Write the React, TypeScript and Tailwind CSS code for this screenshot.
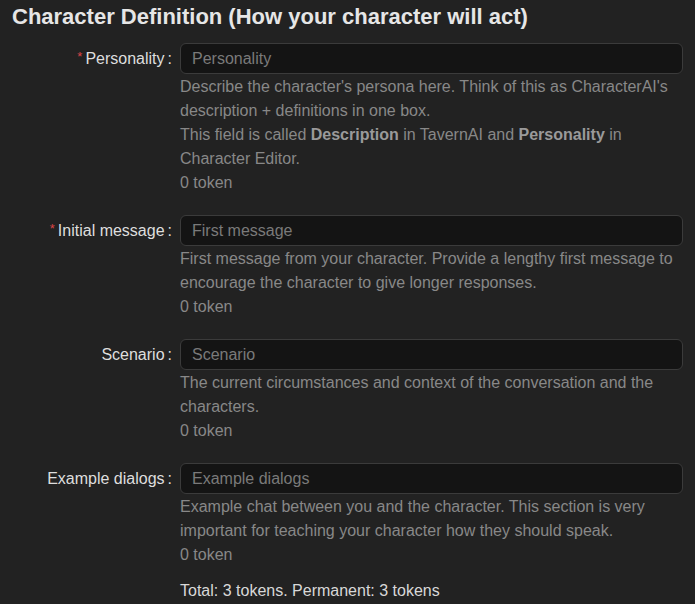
import React from "react";

type Row = {
  label: string;
  required?: boolean;
  placeholder: string;
  help: React.ReactNode;
};

const rows: Row[] = [
  {
    label: "Personality",
    required: true,
    placeholder: "Personality",
    help: (
      <>
        <div>
          Describe the character's persona here. Think of this as CharacterAI's description + definitions in one box.
        </div>
        <div>
          This field is called <b className="font-bold text-[#9a9a9a]">Description</b> in TavernAI and{" "}
          <b className="font-bold text-[#9a9a9a]">Personality</b> in Character Editor.
        </div>
      </>
    ),
  },
  {
    label: "Initial message",
    required: true,
    placeholder: "First message",
    help: (
      <div>
        First message from your character. Provide a lengthy first message to encourage the character to give longer responses.
      </div>
    ),
  },
  {
    label: "Scenario",
    placeholder: "Scenario",
    help: <div>The current circumstances and context of the conversation and the characters.</div>,
  },
  {
    label: "Example dialogs",
    placeholder: "Example dialogs",
    help: (
      <div>
        Example chat between you and the character. This section is very important for teaching your character how they should speak.
      </div>
    ),
  },
];

export default function App() {
  return (
    <div className="w-[695px] h-[604px] bg-[#222222] pl-3 pr-3 pt-[4px] font-['Liberation_Sans',Arial,sans-serif] text-[16px] overflow-hidden">
      <h2 className="text-[22px] leading-[26px] font-bold text-[#e6e6e6] mb-[13px]">
        Character Definition (How your character will act)
      </h2>
      <div className="flex flex-col gap-[20px]">
        {rows.map((r) => (
          <div key={r.label} className="grid grid-cols-[168px_1fr]">
            <div className="h-[31px] flex items-center justify-end pr-[8px] text-[#dedede] leading-[24px]">
              {r.required && (
                <span className="text-[#dc4446] text-[13px] mr-[3px] relative -top-[2px]">*</span>
              )}
              <span>{r.label}</span>
              <span className="ml-[3px]">:</span>
            </div>
            <div>
              <div className="h-[31px] rounded-[6px] border border-[#3b3b3b] bg-[#141414] px-[11px] flex items-center text-[#7a7a7a] leading-[24px]">
                {r.placeholder}
              </div>
              <div className="pt-[1px] text-[#888888] leading-[24px]">
                {r.help}
                <div>0 token</div>
              </div>
            </div>
          </div>
        ))}
      </div>
      <div className="ml-[168px] mt-[12px] leading-[24px] text-[#d8d8d8]">
        Total: 3 tokens. Permanent: 3 tokens
      </div>
    </div>
  );
}
